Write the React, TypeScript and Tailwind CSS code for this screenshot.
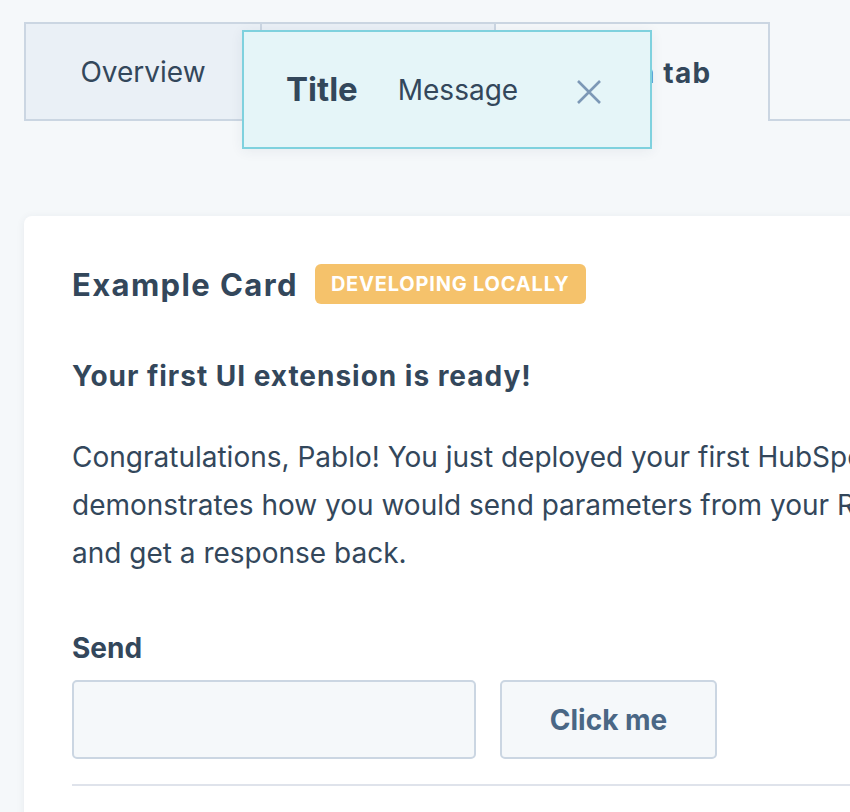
import React from "react";

const font = { fontFamily: "Inter, 'Noto Sans', sans-serif" };

function CloseIcon() {
  return (
    <svg width="26" height="26" viewBox="0 0 26 26" fill="none" stroke="#7c98b6" strokeWidth="2.6" strokeLinecap="butt">
      <path d="M2 2 L24 24 M24 2 L2 24" />
    </svg>
  );
}

function Tabs() {
  return (
    <div className="flex items-stretch pt-[22px] pl-6">
      <div className="flex h-[99px] w-[238px] items-center justify-center border-2 border-[#cbd6e2] bg-[#eaf0f6] text-[28px] text-[#33475b]">
        Overview
      </div>
      <div className="flex h-[99px] w-[234px] items-center justify-center border-2 border-l-0 border-[#cbd6e2] bg-[#eaf0f6] text-[28px] text-[#33475b]">
        Activities
      </div>
      <div className="flex h-[99px] w-[274px] items-center justify-center border-2 border-b-0 border-l-0 border-[#cbd6e2] bg-[#f5f8fa] text-[28px] font-bold tracking-[0.045em] text-[#33475b]">
        Design tab
      </div>
      <div className="flex-1 border-b-2 border-[#cbd6e2]" />
    </div>
  );
}

function Toast() {
  return (
    <div className="absolute left-[242px] top-[30px] flex h-[119px] w-[410px] items-center border-2 border-[#7fd1de] bg-[#e5f5f8] pl-[42px] pr-[48px] shadow-[0_2px_12px_rgba(45,62,80,0.07)]">
      <span className="text-[33px] font-bold leading-none text-[#33475b]">Title</span>
      <span className="ml-[40px] text-[28px] leading-none text-[#33475b]">Message</span>
      <span className="ml-auto mt-1">
        <CloseIcon />
      </span>
    </div>
  );
}

export default function App() {
  return (
    <div className="relative h-[812px] w-[850px] overflow-hidden bg-[#f5f8fa]" style={font}>
      <Tabs />
      <Toast />
      <div className="ml-6 mt-[95px] w-[1200px] rounded-lg bg-white px-12 pt-[48px] shadow-[0_1px_8px_rgba(45,62,80,0.07)]">
        <div className="flex h-10 items-center gap-[17px]">
          <h2 className="text-[31px] font-bold leading-none tracking-[0.045em] text-[#33475b]">Example Card</h2>
          <span className="flex h-10 items-center rounded-md bg-[#f5c26b] px-4 text-[20px] font-bold uppercase tracking-[0.04em] text-white">
            Developing locally
          </span>
        </div>
        <p className="mt-[54px] text-[28px] font-bold leading-[36px] tracking-[0.035em] text-[#33475b]">
          Your first UI extension is ready!
        </p>
        <p className="mt-[39px] whitespace-nowrap text-[28px] leading-[48px] text-[#33475b]">
          Congratulations, Pablo! You just deployed your first HubSpot UI extension. This example
          <br />
          demonstrates how you would send parameters from your React frontend to the serverless function
          <br />
          and get a response back.
        </p>
        <label className="mt-[53px] block text-[28px] font-bold leading-[36px] text-[#33475b]">Send</label>
        <div className="mt-[14px] flex gap-6">
          <input className="h-[79px] w-[404px] rounded-[5px] border-2 border-[#cbd6e2] bg-[#f5f8fa] px-4 text-[28px] outline-none" />
          <button className="h-[79px] w-[217px] rounded-[5px] border-2 border-[#cbd6e2] bg-[#f5f8fa] text-[28px] font-bold text-[#4a6785]">
            Click me
          </button>
        </div>
        <div className="mt-[25px] h-[2px] bg-[#dfe3eb]" />
        <div className="h-20" />
      </div>
    </div>
  );
}
